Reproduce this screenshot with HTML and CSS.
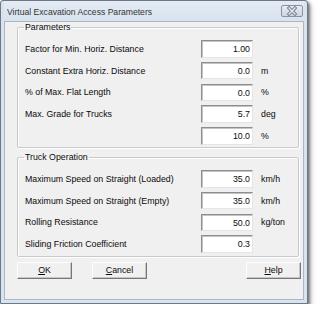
FILE: index.html
```html
<!DOCTYPE html>
<html>
<head>
<meta charset="utf-8">
<link rel="stylesheet" href="styles.css">
</head>
<body>
<div class="window">
  <div class="titlebar">
    <span class="title">Virtual Excavation Access Parameters</span>
    <span class="close">
      <svg width="22" height="12" viewBox="0 0 22 12">
        <path d="M8 3 L14 9 M14 3 L8 9" stroke="#737e8c" stroke-width="3.2" stroke-linecap="square" fill="none"/>
        <path d="M8 3 L14 9 M14 3 L8 9" stroke="#e9edf2" stroke-width="1.3" stroke-linecap="square" fill="none"/>
      </svg>
    </span>
  </div>
  <div class="client">
    <fieldset class="group g1">
      <legend>Parameters</legend>
      <div class="row"><span class="label">Factor for Min. Horiz. Distance</span><span class="field">1.00</span><span class="unit"></span></div>
      <div class="row"><span class="label">Constant Extra Horiz. Distance</span><span class="field">0.0</span><span class="unit">m</span></div>
      <div class="row"><span class="label">% of Max. Flat Length</span><span class="field">0.0</span><span class="unit">%</span></div>
      <div class="row"><span class="label">Max. Grade for Trucks</span><span class="field">5.7</span><span class="unit">deg</span></div>
      <div class="row"><span class="label"></span><span class="field">10.0</span><span class="unit">%</span></div>
    </fieldset>
    <fieldset class="group g2">
      <legend>Truck Operation</legend>
      <div class="row"><span class="label">Maximum Speed on Straight (Loaded)</span><span class="field">35.0</span><span class="unit">km/h</span></div>
      <div class="row"><span class="label">Maximum Speed on Straight (Empty)</span><span class="field">35.0</span><span class="unit">km/h</span></div>
      <div class="row"><span class="label">Rolling Resistance</span><span class="field">50.0</span><span class="unit">kg/ton</span></div>
      <div class="row"><span class="label">Sliding Friction Coefficient</span><span class="field">0.3</span><span class="unit"></span></div>
    </fieldset>
    <div class="buttons">
      <span class="btn"><u>O</u>K</span>
      <span class="btn"><u>C</u>ancel</span>
      <span class="spacer"></span>
      <span class="btn"><u>H</u>elp</span>
    </div>
  </div>
</div>
</body>
</html>
```
FILE: styles.css
```css
html, body {
  margin: 0;
  padding: 0;
  background: #ffffff;
}
body {
  font-family: "Liberation Sans", Arial, sans-serif;
  font-size: 8.8px;
  color: #0a0a0a;
}
.window {
  box-sizing: border-box;
  width: 308px;
  height: 304px;
  border: 1px solid #6b7888;
  border-radius: 3px 3px 0 0;
  background: #d8e3ee;
  padding: 0 3px 3px 3px;
  display: flex;
  flex-direction: column;
  box-shadow: 2px 2px 3px rgba(0,0,0,0.45), 4px 4px 5px rgba(0,0,0,0.15);
}
.titlebar {
  height: 20px;
  display: flex;
  align-items: center;
  justify-content: space-between;
  padding: 0 0 0 3px;
  background: linear-gradient(#e4ebf3, #d8e3ee);
}
.title {
  font-size: 8.6px;
  color: #333333;
  padding-top: 1px;
}
.close {
  box-sizing: border-box;
  width: 22px;
  height: 12px;
  margin-top: -1px;
  border: 1px solid #8894a5;
  border-radius: 2px;
  background: linear-gradient(#e7ecf2, #cdd6e1);
  display: flex;
  align-items: center;
  justify-content: center;
  margin-right: 1px;
}
.close svg {
  display: block;
  margin: -1px;
}
.client {
  flex: 1;
  background: #f0f0f0;
  border: 1px solid #aab7c6;
  padding: 0 4px 0 12px;
}
.group {
  box-sizing: border-box;
  width: 282px;
  margin: 0;
  padding: 0 0 0 7px;
  border: 1px solid #c9c9c9;
  border-radius: 2px;
  box-shadow: inset 1px 1px 0 #ffffff, 1px 1px 0 #ffffff;
}
.group legend {
  padding: 0 1px;
  margin-left: -1px;
  line-height: 11px;
}
.g1 {
  margin-top: 0;
  height: 126px;
  padding-top: 5px;
}
.g2 {
  margin-top: 4px;
  height: 105px;
  padding-top: 5px;
}
.row {
  display: flex;
  align-items: center;
  height: 21.75px;
}
.label {
  width: 176px;
  white-space: nowrap;
}
.field {
  box-sizing: border-box;
  width: 52px;
  height: 17.5px;
  background: #ffffff;
  border-top: 1px solid #8e8e8e;
  border-left: 1px solid #8e8e8e;
  border-right: 1px solid #e4e4e4;
  border-bottom: 1px solid #e4e4e4;
  box-shadow: inset 1px 1px 0 #c4c4c4;
  text-align: right;
  padding-right: 2px;
  line-height: 16px;
}
.unit {
  margin-left: 8px;
}
.buttons {
  display: flex;
  margin-top: 5px;
  gap: 20px;
}
.spacer {
  flex: 1;
}
.btn {
  box-sizing: border-box;
  width: 55px;
  height: 17px;
  border-top: 1px solid #fdfdfd;
  border-left: 1px solid #fdfdfd;
  border-right: 1px solid #767676;
  border-bottom: 1px solid #767676;
  box-shadow: inset -1px -1px 0 #c6c6c6;
  background: #f0f0f0;
  text-align: center;
  line-height: 15px;
}
.btn:last-child {
  margin-right: -2px;
}
```
